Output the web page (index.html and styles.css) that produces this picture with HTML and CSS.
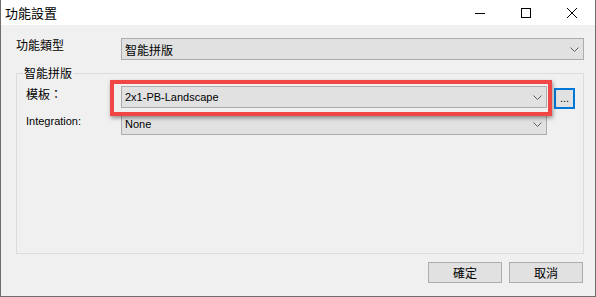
FILE: index.html
```html
<!DOCTYPE html>
<html lang="zh-Hant">
<head>
  <meta charset="UTF-8">
  <title>功能設置</title>
  <link rel="stylesheet" href="styles.css">
</head>
<body>
  <div class="window">
    <div class="titlebar">
      <span class="title">功能設置</span>
      <div class="caption">
        <span class="cap-btn">
          <svg width="10" height="10" viewBox="0 0 10 10"><line x1="0" y1="5.5" x2="10" y2="5.5" stroke="#000" stroke-width="1"/></svg>
        </span>
        <span class="cap-btn">
          <svg width="10" height="10" viewBox="0 0 10 10"><rect x="0.5" y="0.5" width="9" height="9" fill="none" stroke="#000" stroke-width="1"/></svg>
        </span>
        <span class="cap-btn">
          <svg width="10" height="10" viewBox="0 0 10 10"><path d="M0 0 L10 10 M10 0 L0 10" stroke="#000" stroke-width="1"/></svg>
        </span>
      </div>
    </div>

    <div class="content">
      <div class="row">
        <span class="label">功能類型</span>
        <div class="combo combo-wide">
          <span>智能拼版</span>
          <svg class="chevron" width="9" height="5" viewBox="0 0 9 5"><polyline points="0.5,0.5 4.5,4.5 8.5,0.5" fill="none" stroke="#606060" stroke-width="1"/></svg>
        </div>
      </div>

      <fieldset class="group">
        <legend>智能拼版</legend>
        <div class="row">
          <span class="label label-inner">模板：</span>
          <div class="combo-wrap">
            <div class="combo combo-field latin">
              <span>2x1-PB-Landscape</span>
              <svg class="chevron" width="9" height="5" viewBox="0 0 9 5"><polyline points="0.5,0.5 4.5,4.5 8.5,0.5" fill="none" stroke="#606060" stroke-width="1"/></svg>
            </div>
            <div class="mark"></div>
          </div>
          <button type="button" class="browse latin">...</button>
        </div>
        <div class="row row-gap">
          <span class="label label-inner label-latin latin">Integration:</span>
          <div class="combo combo-field latin">
            <span>None</span>
            <svg class="chevron" width="9" height="5" viewBox="0 0 9 5"><polyline points="0.5,0.5 4.5,4.5 8.5,0.5" fill="none" stroke="#606060" stroke-width="1"/></svg>
          </div>
        </div>
      </fieldset>

      <div class="actions">
        <button type="button" class="btn">確定</button>
        <button type="button" class="btn">取消</button>
      </div>
    </div>
  </div>
</body>
</html>
```

FILE: styles.css
```css
*{
  box-sizing:border-box;
}
body{
  margin:0;
  background:#fff;
  font-family:"Noto Sans CJK TC", sans-serif;
  font-size:12px;
  color:#000;
}
.latin{
  font-family:"Liberation Sans", "Noto Sans CJK TC", sans-serif;
  font-size:11px;
}
.window{
  width:596px;
  height:297px;
  border:1px solid #6d6d6d;
  border-top:none;
  background:#f0f0f0;
  display:flex;
  flex-direction:column;
}
.titlebar{
  height:25px;
  background:#fff;
  display:flex;
  align-items:center;
}
.title{
  flex:1;
  font-size:13px;
  line-height:25px;
  padding-left:4px;
}
.caption{
  display:flex;
  height:25px;
}
.cap-btn{
  width:46px;
  display:flex;
  align-items:center;
  justify-content:center;
}
.content{
  flex:1;
  display:flex;
  flex-direction:column;
  padding:13px 11px 13px 15px;
}
.row{
  display:flex;
  align-items:flex-start;
}
.row-gap{
  margin-top:4px;
}
.label{
  width:105px;
  flex:none;
  line-height:14px;
}
.label-inner{
  width:95px;
  padding-top:1px;
}
.label-latin{
  padding-top:2px;
  line-height:13px;
}
.combo{
  height:22px;
  border:1px solid #adadad;
  background:#e1e1e1;
  display:flex;
  align-items:center;
  justify-content:space-between;
  padding:0 4px 0 3px;
}
.combo-wide{
  flex:1;
}
.combo-field{
  width:426px;
}
.chevron{
  margin-top:1px;
}
.combo-wrap{
  position:relative;
}
.mark{
  position:absolute;
  top:-6px;
  left:-11px;
  right:-5px;
  bottom:-8px;
  border:4px solid #f04646;
  box-shadow:1px 2px 4px rgba(0,0,0,0.4);
  z-index:1;
}
.browse{
  width:22px;
  height:21px;
  margin:2px 0 0 7px;
  padding:0;
  border:2px solid #0078d7;
  background:#e1e1e1;
  line-height:17px;
  color:#000;
}
.group{
  flex:1;
  margin:6px 0 0;
  padding:6px 8px 0 9px;
  border:1px solid #dcdcdc;
  min-width:0;
}
.group legend{
  padding:0 1px;
  margin-left:-3px;
  line-height:14px;
}
.actions{
  display:flex;
  justify-content:flex-end;
  gap:7px;
  margin-top:8px;
  padding-right:1px;
}
.btn{
  width:74px;
  height:21px;
  border:1px solid #adadad;
  background:#e1e1e1;
  font-family:"Noto Sans CJK TC", sans-serif;
  font-size:12px;
  line-height:17px;
  padding:0;
  color:#000;
}
```
